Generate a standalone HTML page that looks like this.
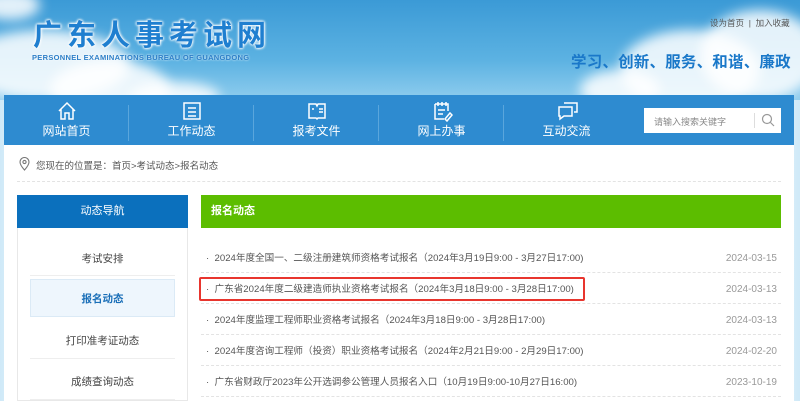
<!DOCTYPE html>
<html><head><meta charset="utf-8"><style>
*{margin:0;padding:0;box-sizing:border-box}
body{width:800px;height:401px;overflow:hidden;font-family:"Liberation Sans","Noto Sans CJK SC",sans-serif;position:relative;background:linear-gradient(90deg,#cfe9f8,#e3f3fb 3%,#e3f3fb 97%,#cfe9f8)}
.sky{position:absolute;left:0;top:0;width:800px;height:100px;background:linear-gradient(180deg,#3b9ad6 0%,#5cb2e2 60%,#8fcdee 100%);overflow:hidden}
.cl{position:absolute;border-radius:50%;background:rgba(255,255,255,.85);filter:blur(6px)}
.abs{position:absolute;white-space:nowrap}
.nav{position:absolute;left:4px;top:95px;width:790px;height:50px;background:#2e8bd0}
.ni{position:absolute;top:0;width:125px;height:50px;color:#fff;font-size:12px;text-align:center}
.ni span{position:absolute;left:0;right:0;top:27px}
.ni svg{position:absolute;left:52px;top:5px}
.sep{position:absolute;top:10px;width:1px;height:36px;background:#5aa6dc}
.main{position:absolute;left:4px;top:145px;width:790px;height:256px;background:#fff}
.row{position:absolute;left:201px;width:580px;height:31px;border-bottom:1px dashed #e3e3e3;font-size:9.6px;color:#555;line-height:14px;white-space:nowrap}
.row .t{position:absolute;left:5px;top:10px}
.row .d{position:absolute;right:4px;top:10px;color:#999;font-size:10px}
.si{position:absolute;left:30px;width:145px;text-align:center;font-size:10.5px;color:#444}
</style></head><body>
<div class="sky">
<div class="cl" style="left:-40px;top:30px;width:170px;height:70px"></div>
<div class="cl" style="left:50px;top:60px;width:120px;height:60px"></div>
<div class="cl" style="left:130px;top:82px;width:90px;height:30px"></div>
<div class="cl" style="left:-20px;top:-10px;width:60px;height:30px"></div>
<div class="cl" style="left:620px;top:30px;width:140px;height:80px"></div>
<div class="cl" style="left:700px;top:10px;width:120px;height:90px"></div>
<div class="cl" style="left:580px;top:70px;width:80px;height:40px"></div>
</div>
<div class="abs" style="left:33px;top:12px;font-size:29px;font-weight:bold;color:#1f7fd0;letter-spacing:5px;text-shadow:0 0 3px #fff,0 0 3px #fff,0 0 2px #fff">广东人事考试网</div>
<div class="abs" style="left:32px;top:53px;font-size:7.5px;color:#2d7fc8;font-weight:bold;letter-spacing:.3px;text-shadow:0 0 2px #fff">PERSONNEL EXAMINATIONS BUREAU OF GUANGDONG</div>
<div class="abs" style="left:710px;top:17px;font-size:8.5px;color:#555">设为首页 &nbsp;|&nbsp; 加入收藏</div>
<div class="abs" style="left:571px;top:50px;font-size:15.5px;color:#1a78c9;font-weight:bold;letter-spacing:0.2px">学习、创新、服务、和谐、廉政</div>
<div class="nav">
<div class="ni" style="left:0"><svg width="22" height="22" viewBox="0 0 22 22" fill="none" stroke="#fff" stroke-width="1.5"><path d="M3 11L11 3l8 8M5 9v10h4v-6h4v6h4V9"/></svg><span>网站首页</span></div>
<div class="sep" style="left:124px"></div>
<div class="ni" style="left:125px"><svg width="22" height="22" viewBox="0 0 22 22" fill="none" stroke="#fff" stroke-width="1.5"><rect x="3" y="3" width="16" height="16"/><path d="M7 8h8M7 12h8M7 16h8"/></svg><span>工作动态</span></div>
<div class="sep" style="left:249px"></div>
<div class="ni" style="left:250px"><svg width="22" height="22" viewBox="0 0 22 22" fill="none" stroke="#fff" stroke-width="1.5"><path d="M3 4h7l1 2 1-2h7v14h-7l-1 1-1-1H3z"/><path d="M13 9h4M13 12h4M6 9h2"/></svg><span>报考文件</span></div>
<div class="sep" style="left:374px"></div>
<div class="ni" style="left:375px"><svg width="22" height="22" viewBox="0 0 22 22" fill="none" stroke="#fff" stroke-width="1.5"><path d="M4 4h13v7M4 4v15h9"/><path d="M7 2v4M11 2v4M15 2v4M7 10h7M7 14h5"/><path d="M14 19l5-6 2 2-5 6z"/></svg><span>网上办事</span></div>
<div class="sep" style="left:499px"></div>
<div class="ni" style="left:500px"><svg width="24" height="22" viewBox="0 0 24 22" fill="none" stroke="#fff" stroke-width="1.5"><path d="M8 3h13v9h-3M3 7h13v9H8l-4 3v-3H3z"/></svg><span>互动交流</span></div>
<div class="abs" style="left:640px;top:13px;width:137px;height:25px;background:#fff;font-size:9px;color:#888;padding:7px 0 0 10px">请输入搜索关键字
<div class="abs" style="left:110px;top:5px;width:1px;height:15px;background:#ddd"></div>
<svg class="abs" style="left:117px;top:5px" width="14" height="14" viewBox="0 0 14 14" fill="none" stroke="#999" stroke-width="1.2"><circle cx="6" cy="6" r="4.5"/><path d="M9.5 9.5L13 13"/></svg></div>
</div>
<div class="main"></div>
<svg class="abs" style="left:19px;top:157px" width="11" height="14" viewBox="0 0 11 14" fill="none" stroke="#777" stroke-width="1.1"><path d="M5.5 13S1 8 1 5a4.5 4.5 0 0 1 9 0c0 3-4.5 8-4.5 8z"/><circle cx="5.5" cy="5" r="1.6"/></svg>
<div class="abs" style="left:36px;top:158px;font-size:9.5px;color:#555">您现在的位置是：首页&gt;考试动态&gt;报名动态</div>
<div class="abs" style="left:17px;top:181px;width:764px;border-top:1px dashed #e3e3e3"></div>
<div class="abs" style="left:17px;top:195px;width:171px;height:206px;border:1px solid #e8e8e8"></div>
<div class="abs" style="left:17px;top:195px;width:171px;height:33px;background:#0b70bd;color:#fff;font-size:11px;text-align:center;line-height:33px">动态导航</div>
<div class="si" style="top:251px">考试安排</div>
<div class="abs" style="left:30px;top:275px;width:145px;border-top:1px solid #eee"></div>
<div class="abs" style="left:30px;top:279px;width:145px;height:38px;background:#eef6fd;border:1px solid #dbeaf6"></div>
<div class="si" style="top:291px;color:#1a6fb8;font-weight:bold">报名动态</div>
<div class="si" style="top:333px">打印准考证动态</div>
<div class="abs" style="left:30px;top:358px;width:145px;border-top:1px solid #eee"></div>
<div class="si" style="top:374px">成绩查询动态</div>
<div class="abs" style="left:30px;top:399px;width:145px;border-top:1px solid #eee"></div>
<div class="abs" style="left:201px;top:195px;width:580px;height:33px;background:#5cbd00;color:#fff;font-size:11px;font-weight:bold;line-height:33px;padding-left:10px">报名动态</div>
<div class="row" style="top:242px"><span class="t">·&nbsp; 2024年度全国一、二级注册建筑师资格考试报名（2024年3月19日9:00 - 3月27日17:00)</span><span class="d">2024-03-15</span></div>
<div class="row" style="top:273px"><span class="t">·&nbsp; 广东省2024年度二级建造师执业资格考试报名（2024年3月18日9:00 - 3月28日17:00)</span><span class="d">2024-03-13</span></div>
<div class="row" style="top:304px"><span class="t">·&nbsp; 2024年度监理工程师职业资格考试报名（2024年3月18日9:00 - 3月28日17:00)</span><span class="d">2024-03-13</span></div>
<div class="row" style="top:335px"><span class="t">·&nbsp; 2024年度咨询工程师（投资）职业资格考试报名（2024年2月21日9:00 - 2月29日17:00)</span><span class="d">2024-02-20</span></div>
<div class="row" style="top:366px"><span class="t">·&nbsp; 广东省财政厅2023年公开选调参公管理人员报名入口（10月19日9:00-10月27日16:00)</span><span class="d">2023-10-19</span></div>
<div class="abs" style="left:199px;top:277px;width:386px;height:24px;border:2px solid #e8352e;border-radius:2px"></div>
</body></html>
